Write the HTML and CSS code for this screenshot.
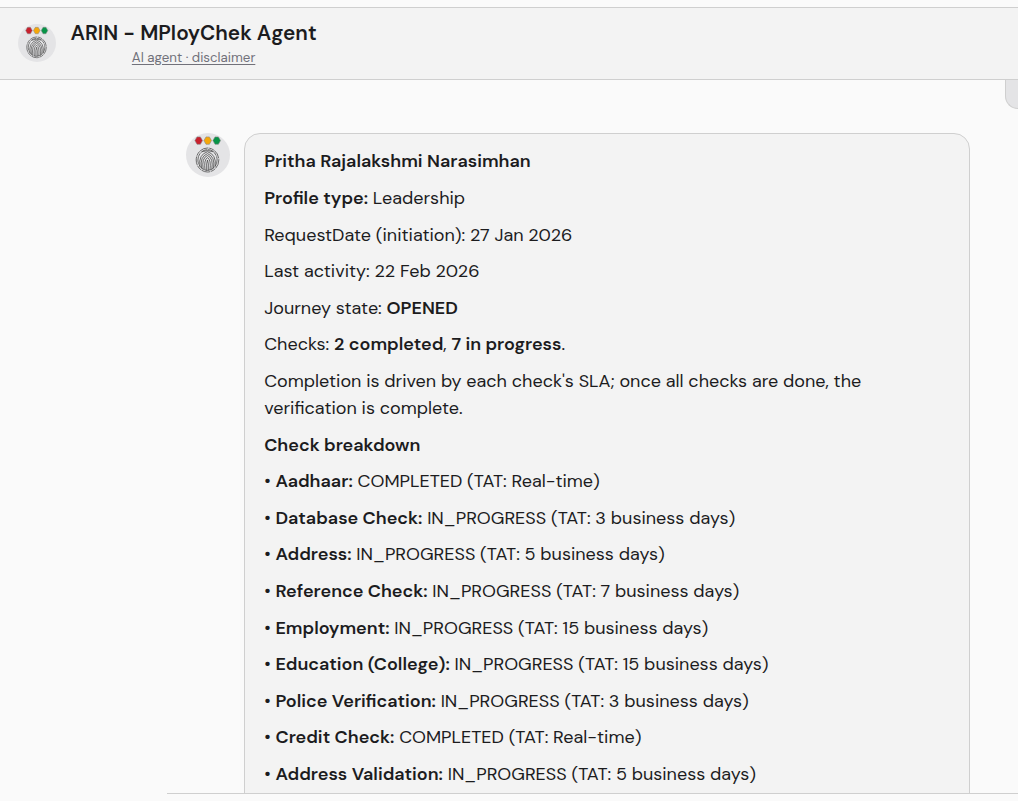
FILE: index.html
```html
<!DOCTYPE html>
<html lang="en">
<head>
    <meta charset="UTF-8">
    <meta name="viewport" content="width=device-width, initial-scale=1.0">
    <title>ARIN - MPloyChek Agent</title>
    <link rel="stylesheet" href="styles.css">
</head>
<body>

    <!-- logo shared by the header and the messages -->
    <svg class="sprite" width="0" height="0">
        <symbol id="logo" viewBox="0 0 44 44">
            <g stroke="#888" stroke-width=".6">
                <path fill="#c9202d" d="M11 3.900h3.400l2.100 3.700-2.100 3.700h-3.400l-2.100-3.700z"/>
                <path fill="#f5a70a" d="M20 3.900h3.400l2.100 3.700-2.100 3.700h-3.400l-2.100-3.700z"/>
                <path fill="#079447" d="M29 3.900h3.400l2.100 3.700-2.100 3.700h-3.400l-2.100-3.700z"/>
            </g>
            <g fill="none" stroke="#4c4c4c" stroke-width=".8">
                <ellipse cx="21.500" cy="27" rx="11.300" ry="12" stroke-dasharray="9 .8 5 .7"/>
                <ellipse cx="21.500" cy="27" rx="9.600" ry="10.400" stroke-dasharray="7 .8 11 .8"/>
                <path d="M13.800 33.500q-1.500-12 7.700-14.800 9.200 2.800 7.700 14.800"/>
                <path d="M15.500 35.200q-2-11.500 6-14.600 8 3.100 6 14.600"/>
                <path d="M17.200 36.500q-1.900-11.500 4.300-14 6.200 2.500 4.300 14"/>
                <path d="M19 37q-1.300-10 2.500-12.500 3.800 2.500 2.500 12.500"/>
                <path d="M20.700 37.500q-.5-8 .8-10.500 1.300 2.500.8 10.500"/>
                <path d="M16 18.700q5.500-2.200 11 0"/>
            </g>
        </symbol>
    </svg>

    <header class="chat-header">
        <svg class="avatar small"><use href="#logo"/></svg>
        <div class="titles">
            <h1>ARIN - MPloyChek Agent</h1>
            <a class="disclaimer">AI agent · disclaimer</a>
        </div>
    </header>

    <main class="messages">
        <div class="message user">
            <div class="user-bubble"></div>
        </div>
        <div class="message agent">
            <svg class="avatar"><use href="#logo"/></svg>
            <div class="bubble">
                <p><strong>Pritha Rajalakshmi Narasimhan</strong></p>
                <p><strong>Profile type:</strong> Leadership</p>
                <p>RequestDate (initiation): 27 Jan 2026</p>
                <p>Last activity: 22 Feb 2026</p>
                <p>Journey state: <strong>OPENED</strong></p>
                <p>Checks: <strong>2 completed</strong>, <strong>7 in progress</strong>.</p>
                <p>Completion is driven by each check's SLA; once all checks are done, the verification is complete.</p>
                <p><strong>Check breakdown</strong></p>
                <p>• <strong>Aadhaar:</strong> COMPLETED (TAT: Real-time)</p>
                <p>• <strong>Database Check:</strong> IN_PROGRESS (TAT: 3 business days)</p>
                <p>• <strong>Address:</strong> IN_PROGRESS (TAT: 5 business days)</p>
                <p>• <strong>Reference Check:</strong> IN_PROGRESS (TAT: 7 business days)</p>
                <p>• <strong>Employment:</strong> IN_PROGRESS (TAT: 15 business days)</p>
                <p>• <strong>Education (College):</strong> IN_PROGRESS (TAT: 15 business days)</p>
                <p>• <strong>Police Verification:</strong> IN_PROGRESS (TAT: 3 business days)</p>
                <p>• <strong>Credit Check:</strong> COMPLETED (TAT: Real-time)</p>
                <p>• <strong>Address Validation:</strong> IN_PROGRESS (TAT: 5 business days)</p>
            </div>
        </div>
    </main>

</body>
</html>
```
FILE: styles.css
```css
* {
    box-sizing: border-box;
    margin: 0;
    padding: 0;
}
body {
    height: 100vh;
    padding-top: 7px;
    overflow: hidden;
    display: flex;
    flex-direction: column;
    background-color: #fafafa;
    color: #1c1c1e;
    font-family: "DM Sans", Inter, sans-serif;
}
.sprite {
    position: absolute;
}
.chat-header {
    display: flex;
    align-items: center;
    gap: 14.5px;
    height: 73px;
    flex-shrink: 0;
    padding: 0 18px 1px;
    background-color: #f3f3f3;
    border-top: 1px solid #cfcfcf;
    border-bottom: 1px solid #cfcfcf;
}
.avatar {
    width: 44px;
    height: 44px;
    flex-shrink: 0;
    border-radius: 50%;
    background-color: #e4e4e6;
}
.avatar.small {
    width: 38px;
    height: 38px;
}
.titles {
    display: flex;
    flex-direction: column;
    align-items: center;
}
h1 {
    font-size: 20.8px;
    font-weight: 600;
    line-height: 28px;
    white-space: nowrap;
}
.disclaimer {
    font-size: 13.3px;
    line-height: 21px;
    color: #71717a;
    text-decoration: underline;
    text-underline-offset: 2px;
}
.messages {
    height: 714px;
    flex-shrink: 0;
    margin-left: 167px;
    padding-left: 19px;
    overflow: hidden;
    border-bottom: 1px solid #cfcfcf;
}
.message {
    display: flex;
}
.user {
    justify-content: flex-end;
    margin-bottom: 24px;
}
.user-bubble {
    width: 13px;
    height: 29px;
    background-color: #e4e4e6;
    border: 1px solid #cfcfcf;
    border-width: 0 0 1px 1px;
    border-bottom-left-radius: 14px;
}
.agent {
    gap: 14px;
}
.bubble {
    width: 726px;
    padding: 14.36px 19.2px;
    background-color: #f3f3f3;
    border: 1px solid #cfcfcf;
    border-radius: 16px;
    font-size: 18px;
    line-height: 27.2px;
}
.bubble p {
    margin-bottom: 9.38px;
}
strong {
    font-weight: 600;
}
```
